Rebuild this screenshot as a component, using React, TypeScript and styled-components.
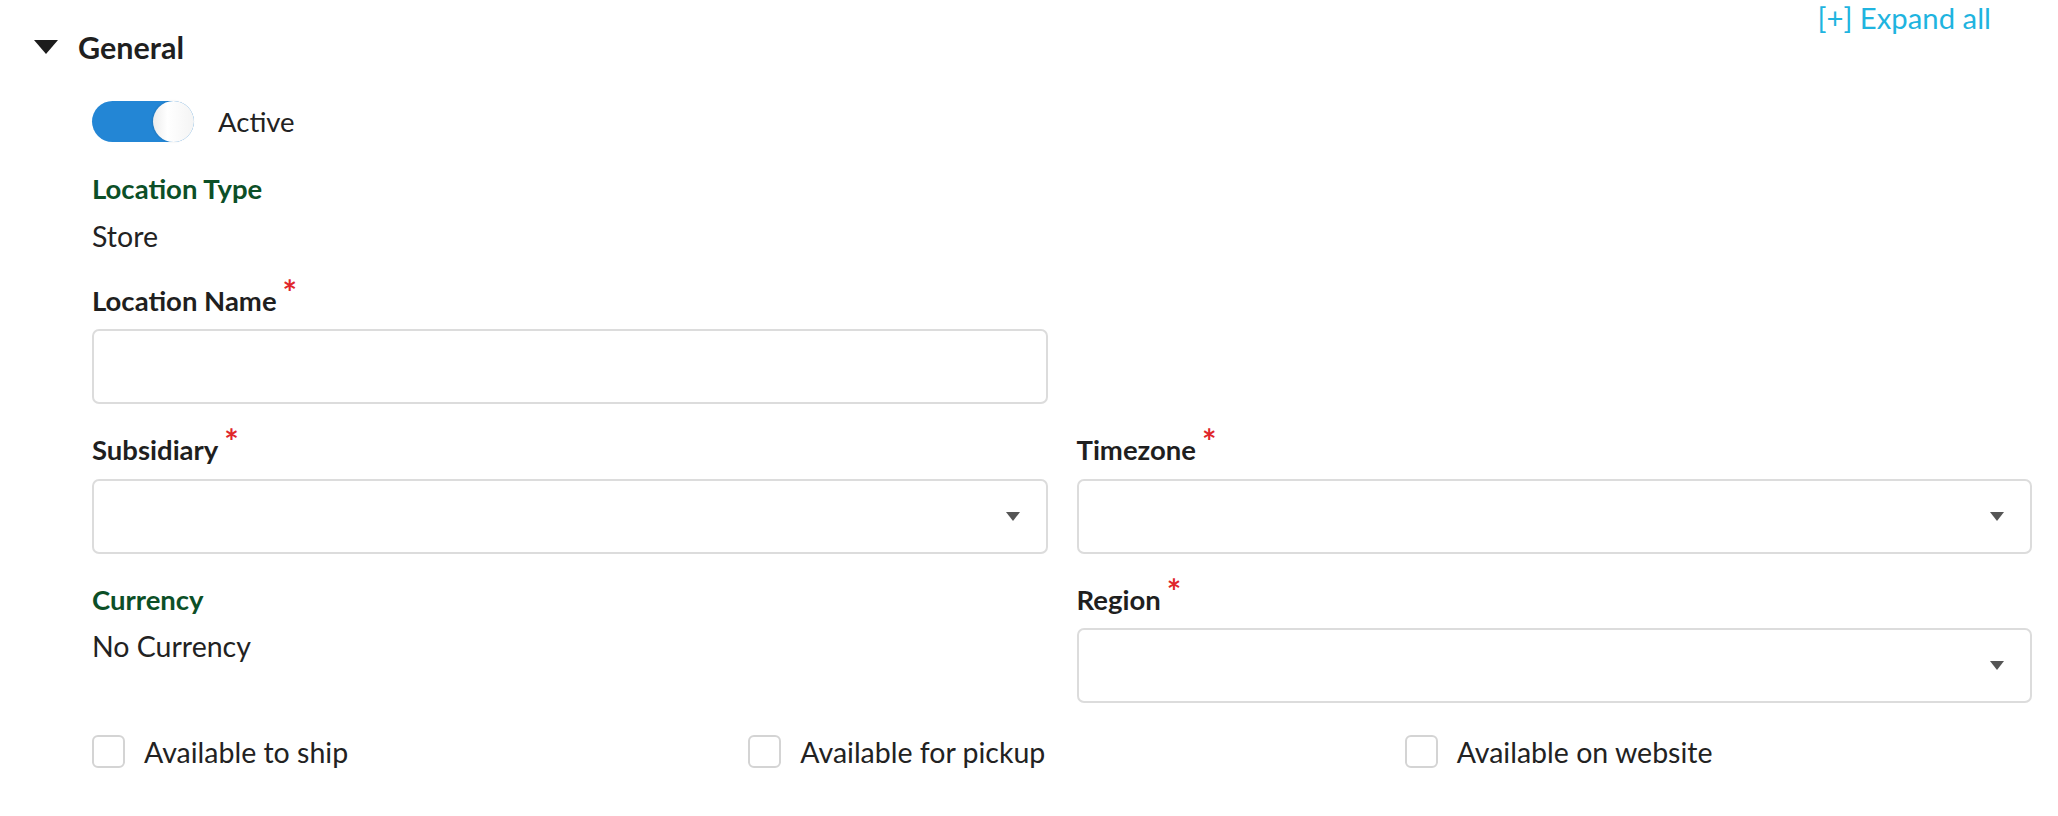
import React from "react";
import styled, { createGlobalStyle } from "styled-components";

const GlobalStyle = createGlobalStyle`
  html, body {
    margin: 0;
    padding: 0;
    background: #ffffff;
  }
  body {
    font-family: "Lato", "Open Sans", sans-serif;
    color: #222222;
  }
`;

const Page = styled.div`
  width: 2058px;
  box-sizing: border-box;
  padding: 0 26px 40px 34px;
`;

const HeaderRow = styled.div`
  display: flex;
  justify-content: space-between;
  align-items: flex-start;
`;

const SectionToggle = styled.div`
  display: flex;
  align-items: center;
  gap: 20px;
  margin-top: 27px;
  height: 40px;
`;

const Caret = styled.span`
  width: 0;
  height: 0;
  border-left: 12px solid transparent;
  border-right: 12px solid transparent;
  border-top: 14px solid #1c1c1c;
`;

const SectionTitle = styled.span`
  font-size: 30.5px;
  font-weight: 700;
  color: #1f1f1f;
  line-height: 40px;
`;

const ExpandLink = styled.a`
  font-size: 29.3px;
  line-height: 36px;
  color: #1fb4df;
  margin-right: 41px;
  cursor: pointer;
`;

const Content = styled.div`
  display: flex;
  flex-direction: column;
  gap: 30px;
  padding-left: 58px;
  margin-top: 34px;
`;

const SwitchRow = styled.label`
  display: flex;
  align-items: center;
  gap: 24px;
  font-size: 27.5px;
`;

const Track = styled.span<{ $on: boolean }>`
  display: flex;
  justify-content: ${({ $on }) => ($on ? "flex-end" : "flex-start")};
  width: 102px;
  height: 41px;
  border-radius: 21px;
  background: ${({ $on }) => ($on ? "#2386d5" : "#cccccc")};
`;

const Knob = styled.span`
  width: 41px;
  height: 41px;
  border-radius: 50%;
  background: linear-gradient(90deg, #ececec 0%, #ffffff 35%, #f4f4f4 100%);
  box-shadow: -1px 0 2px rgba(0, 0, 0, 0.12);
`;

const Grid = styled.div<{ $cols: number }>`
  display: grid;
  grid-template-columns: repeat(${({ $cols }) => $cols}, 1fr);
  column-gap: 29px;
  row-gap: 29px;
`;

const Field = styled.div`
  display: flex;
  flex-direction: column;
  gap: 11.5px;
`;

const Label = styled.div<{ $readOnly?: boolean }>`
  font-size: 27.5px;
  font-weight: 700;
  line-height: 34px;
  color: ${({ $readOnly }) => ($readOnly ? "#0c4f27" : "#1f1f1f")};
`;

const Required = styled.span`
  color: #e0262b;
  font-weight: 700;
  font-size: 34px;
  line-height: 0;
  margin-left: 6px;
  position: relative;
  top: -6px;
`;

const Value = styled.div`
  font-size: 28.5px;
  line-height: 36px;
  color: #222222;
`;

const TextInput = styled.input`
  box-sizing: border-box;
  width: 100%;
  height: 75px;
  border: 2px solid #dcdcdc;
  border-radius: 7px;
  padding: 0 20px;
  font-family: inherit;
  font-size: 27px;
  outline: none;
`;

const SelectBox = styled.div`
  box-sizing: border-box;
  display: flex;
  align-items: center;
  justify-content: flex-end;
  height: 75px;
  border: 2px solid #dcdcdc;
  border-radius: 7px;
  padding: 0 26px;
`;

const SelectArrow = styled.span`
  width: 0;
  height: 0;
  border-left: 7px solid transparent;
  border-right: 7px solid transparent;
  border-top: 9px solid #555555;
`;

const CheckRow = styled.label`
  display: flex;
  align-items: center;
  gap: 19px;
  height: 33px;
  margin-top: 2px;
  font-size: 28.5px;
  color: #222222;
`;

const CheckBox = styled.span`
  box-sizing: border-box;
  flex: none;
  width: 33px;
  height: 33px;
  border: 2px solid #d4d4d4;
  border-radius: 6px;
  background: #ffffff;
`;

const ReqLabel = ({ text }: { text: string }) => (
  <Label>
    {text}
    <Required>*</Required>
  </Label>
);

const Select = ({ label }: { label: string }) => (
  <Field>
    <ReqLabel text={label} />
    <SelectBox>
      <SelectArrow />
    </SelectBox>
  </Field>
);

const ReadOnly = ({ label, value }: { label: string; value: string }) => (
  <Field>
    <Label $readOnly>{label}</Label>
    <Value>{value}</Value>
  </Field>
);

const checks = ["Available to ship", "Available for pickup", "Available on website"];

export default function App() {
  return (
    <>
      <GlobalStyle />
      <Page>
        <HeaderRow>
          <SectionToggle>
            <Caret />
            <SectionTitle>General</SectionTitle>
          </SectionToggle>
          <ExpandLink>[+] Expand all</ExpandLink>
        </HeaderRow>

        <Content>
          <SwitchRow>
            <Track $on>
              <Knob />
            </Track>
            Active
          </SwitchRow>

          <ReadOnly label="Location Type" value="Store" />

          <Grid $cols={2}>
            <Field>
              <ReqLabel text="Location Name" />
              <TextInput />
            </Field>
            <div />
            <Select label="Subsidiary" />
            <Select label="Timezone" />
            <ReadOnly label="Currency" value="No Currency" />
            <Select label="Region" />
          </Grid>

          <Grid $cols={3}>
            {checks.map((c) => (
              <CheckRow key={c}>
                <CheckBox />
                {c}
              </CheckRow>
            ))}
          </Grid>
        </Content>
      </Page>
    </>
  );
}
